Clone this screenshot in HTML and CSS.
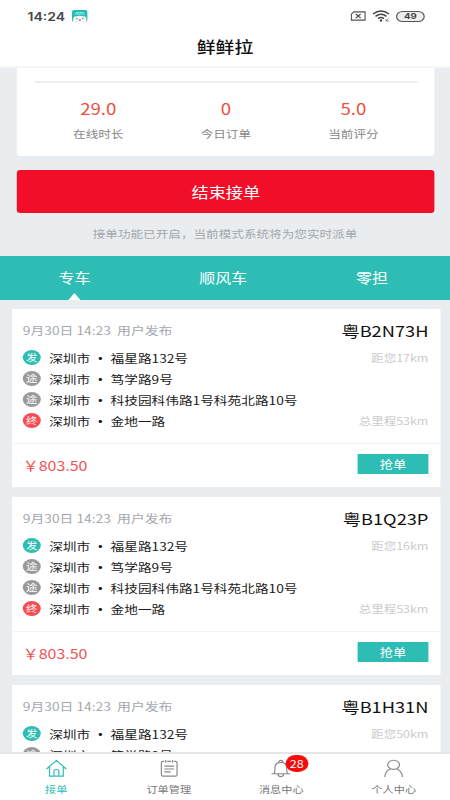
FILE: index.html
```html
<!DOCTYPE html>
<html lang="zh-CN">
<head>
<meta charset="utf-8">
<title>鲜鲜拉</title>
<link rel="stylesheet" href="styles.css">
</head>
<body>
<div class="app">
  <header class="top">
    <div class="status">
      <span class="clock">14:24</span>
      <svg class="cat" viewBox="0 0 16 12" preserveAspectRatio="none"><rect width="16" height="12" rx="2" fill="#22bdb5"/><path d="M1 12C1 8 2 5.500 4 6.500Q8 5 12 6.500C14 5.500 15 8 15 12Z" fill="#f4f4f4"/><path d="M3 4h10M4 2.600h8" stroke="#c5f0ed" stroke-width="1" stroke-dasharray="1.600 .5"/><path d="M5 8v1M11 8v1M7 10h2" stroke="#555" stroke-width="1"/></svg>
      <span class="grow"></span>
      <svg class="sim" viewBox="0 0 16 11" preserveAspectRatio="none"><path d="M3.500 1H15V10H1V3.500Z" fill="none" stroke="#555" stroke-width="1.200"/><path d="M5.500 3.200l5 4.600M10.500 3.200l-5 4.600" stroke="#444" stroke-width="1.300"/></svg>
      <svg class="wifi" viewBox="0 0 18 12" preserveAspectRatio="none"><path d="M1 4Q9-2.200 17 4M3.500 6.400Q9 2 14.500 6.400M6 8.600Q9 6.200 12 8.600" fill="none" stroke="#444" stroke-width="1.500"/><circle cx="9" cy="10.500" r="1.200" fill="#444"/><path d="M14 11l2.500-2.500M14 9v2h3" fill="none" stroke="#777" stroke-width=".8"/></svg>
      <span class="battery">49</span>
    </div>
    <h1 class="title">鲜鲜拉</h1>
  </header>

  <main class="page">
    <section class="stats">
      <div class="stat"><b>29.0</b><span>在线时长</span></div>
      <div class="stat"><b>0</b><span>今日订单</span></div>
      <div class="stat"><b>5.0</b><span>当前评分</span></div>
    </section>
    <button class="stop">结束接单</button>
    <p class="hint">接单功能已开启，当前模式系统将为您实时派单</p>
    <nav class="tabs">
      <span class="tab on">专车</span><span class="tab">顺风车</span><span class="tab">零担</span>
    </nav>
    <div class="orders">
      <article class="order">
        <div class="head"><span class="date">9月30日 14:23&nbsp; 用户发布</span><span class="plate">粤B2N73H</span></div>
        <ul class="route">
          <li><i class="dot from">发</i><span class="addr">深圳市<em>·</em>福星路132号</span><small>距您17km</small></li>
          <li><i class="dot">途</i><span class="addr">深圳市<em>·</em>笃学路9号</span></li>
          <li><i class="dot">途</i><span class="addr">深圳市<em>·</em>科技园科伟路1号科苑北路10号</span></li>
          <li><i class="dot to">终</i><span class="addr">深圳市<em>·</em>金地一路</span><small>总里程53km</small></li>
        </ul>
        <div class="foot"><span class="price">￥803.50</span><button class="grab">抢单</button></div>
      </article>
      <article class="order">
        <div class="head"><span class="date">9月30日 14:23&nbsp; 用户发布</span><span class="plate">粤B1Q23P</span></div>
        <ul class="route">
          <li><i class="dot from">发</i><span class="addr">深圳市<em>·</em>福星路132号</span><small>距您16km</small></li>
          <li><i class="dot">途</i><span class="addr">深圳市<em>·</em>笃学路9号</span></li>
          <li><i class="dot">途</i><span class="addr">深圳市<em>·</em>科技园科伟路1号科苑北路10号</span></li>
          <li><i class="dot to">终</i><span class="addr">深圳市<em>·</em>金地一路</span><small>总里程53km</small></li>
        </ul>
        <div class="foot"><span class="price">￥803.50</span><button class="grab">抢单</button></div>
      </article>
      <article class="order">
        <div class="head"><span class="date">9月30日 14:23&nbsp; 用户发布</span><span class="plate">粤B1H31N</span></div>
        <ul class="route">
          <li><i class="dot from">发</i><span class="addr">深圳市<em>·</em>福星路132号</span><small>距您50km</small></li>
          <li><i class="dot">途</i><span class="addr">深圳市<em>·</em>笃学路9号</span></li>
        </ul>
      </article>
    </div>
  </main>

  <nav class="bottom">
    <a class="item on">
      <svg viewBox="0 0 22 20" preserveAspectRatio="none"><path d="M1 10.500L11 1.500L21 10.500M4 8.500V18H18V8.500M8.500 18V12.500Q8.500 11 11 11T13.500 12.500V18"/></svg>
      <span>接单</span>
    </a>
    <a class="item">
      <svg viewBox="0 0 22 20" preserveAspectRatio="none"><path d="M6 2.500H4.500Q3 2.500 3 4V16.500Q3 18 4.500 18H17.500Q19 18 19 16.500V4Q19 2.500 17.500 2.500H16M9 2.500H13M7.500 1V4M14.500 1V4M6 7.500H16M6 10.500H16M6 13.500H12.500"/></svg>
      <span>订单管理</span>
    </a>
    <a class="item">
      <svg viewBox="0 0 22 20" preserveAspectRatio="none"><path d="M1.500 15.500H20.500M4 15.500Q5 14 5 11V9.500Q5 3.500 11 3.500T17 9.500V11Q17 14 18 15.500M9 3.500Q9 1.500 11 1.500T13 3.500M8 16Q8.500 18.500 11 18.500T14 16"/></svg>
      <span>消息中心</span>
      <b class="badge">28</b>
    </a>
    <a class="item">
      <svg viewBox="0 0 22 20" preserveAspectRatio="none"><path d="M8 10.300A6 4.800 0 1 1 14 10.300Q11 11.500 8 10.300Q2.500 12.500 2 19M14 10.300Q19.500 12.500 20 19"/></svg>
      <span>个人中心</span>
    </a>
  </nav>
</div>
</body>
</html>
```

FILE: styles.css
```css
* { box-sizing: border-box; }
html, body { margin: 0; width: 450px; height: 800px; overflow: hidden; }
button { border: 0; padding: 0; font: inherit; }

/* 375-unit wide layout stretched across the 450px window */
.app {
  width: 375px;
  height: 800px;
  display: flex;
  flex-direction: column;
  transform: scaleX(1.2);
  transform-origin: 0 0;
  background: #e9edef;
  color: #1a1a1a;
  font-family: "Noto Sans CJK SC", sans-serif;
}

.top { height: 68px; flex: none; background: #fff; border-bottom: 2px solid #f5f6f6; }
.status { display: flex; align-items: center; height: 32px; padding: 0 21px 0 23px; }
.clock { width: 31.500px; font: 600 11.700px/32px Inter, sans-serif; color: #444; padding-top: 1px; }
.cat { width: 13px; height: 12px; margin-left: 5px; }
.grow { flex: 1; }
.sim { width: 13px; height: 10px; margin-right: 5px; }
.wifi { width: 15px; height: 12px; margin-right: 5px; }
.battery {
  width: 24px; height: 11px;
  border: 1px solid #555; border-radius: 6px;
  background: #eee;
  font: 700 8px/9px Inter, sans-serif;
  text-align: center; color: #444;
}
.title { margin: 0; font-size: 15.700px; line-height: 30px; font-weight: 500; text-align: center; color: #111; }

.page { flex: 1; min-height: 0; overflow: hidden; display: flex; flex-direction: column; }
.stats {
  flex: none; height: 88px; margin: 0 12.800px 0 14.200px; padding: 13px 14.500px 0;
  background: #fff; border-radius: 0 0 3px 3px;
  display: flex; position: relative;
}
.stats::before { content: ""; position: absolute; left: 14.500px; right: 14.500px; top: 13px; height: 2px; background: #eceeef; }
.stat { flex: 1; display: flex; flex-direction: column; align-items: center; }
.stat b { margin-top: 16px; font-weight: 400; font-size: 15.500px; line-height: 22px; color: #ea5040; }
.stat span { margin-top: 5px; font-size: 10.500px; line-height: 20px; color: #888; }
.stop {
  flex: none; height: 43px; margin: 14px 12.800px 0 14.200px;
  background: #f20d28; color: #fff; border-radius: 3px;
  font-size: 14.300px; line-height: 43px;
}
.hint { flex: none; margin: 11px 0 0; height: 32px; font-size: 10.500px; line-height: 20px; text-align: center; color: #a4a8ae; }
.tabs { flex: none; height: 43.500px; padding-right: 3px; display: flex; background: #2dbdb5; color: #fff; font-size: 13.300px; line-height: 44px; text-align: center; }
.tab { flex: 1; position: relative; }
.tab.on::after {
  content: ""; position: absolute; left: 50%; bottom: 0; margin-left: -5px;
  border: 5px solid transparent; border-top: 0; border-bottom: 7px solid #fff;
}

.orders { padding: 9.500px 8.300px 0 9.700px; display: flex; flex-direction: column; gap: 10px; }
.order { flex: none; height: 178px; background: #fff; }
.head { height: 38px; padding: 7px 9.700px 0 9.300px; display: flex; justify-content: space-between; line-height: 28px; }
.date { font-size: 11.500px; color: #a4a8ae; }
.plate { font-size: 15.200px; color: #111; }
.route { list-style: none; margin: 0; padding: 0 9.700px 0 9.300px; height: 97px; border-bottom: 1px solid #f3f4f4; }
.route li { display: flex; align-items: center; height: 21.100px; }
.dot {
  width: 15px; height: 15px; margin-right: 7px; border-radius: 50%;
  background: #999; color: #fff; font-style: normal; font-size: 9.500px; line-height: 14.500px; text-align: center;
}
.from { background: #2dbdb5; }
.to { background: #fa4b50; }
.addr { flex: 1; font-size: 11.400px; }
.addr em { display: inline-block; width: 17px; text-align: center; font-style: normal; font-weight: 700; }
.route small { font-size: 10.400px; color: #cbcbcb; }
.foot { display: flex; justify-content: space-between; padding: 10px 9.700px 0 9.300px; }
.price { font-size: 13.300px; line-height: 24px; color: #ee5457; }
.grab { width: 59px; height: 20px; background: #2dbdb5; color: #fff; font-size: 11px; line-height: 20px; }

.bottom { flex: none; height: 48px; display: flex; background: #fff; border-top: 2px solid #e5e7e7; }
.item { flex: 1; position: relative; display: flex; flex-direction: column; align-items: center; font-size: 9.300px; line-height: 14px; color: #777; }
.item svg { width: 18px; height: 19px; margin: 5px 0 4px; fill: none; stroke: #888; stroke-width: 1.200; }
.item.on { color: #2dbdb5; }
.item.on svg { stroke: #2dbdb5; }
.badge {
  position: absolute; left: 50px; top: 1px; width: 19.500px; height: 17px;
  border-radius: 9px; background: #f90b0b; color: #fff;
  font-weight: 400; font-size: 10.500px; line-height: 17px; text-align: center;
}
```
